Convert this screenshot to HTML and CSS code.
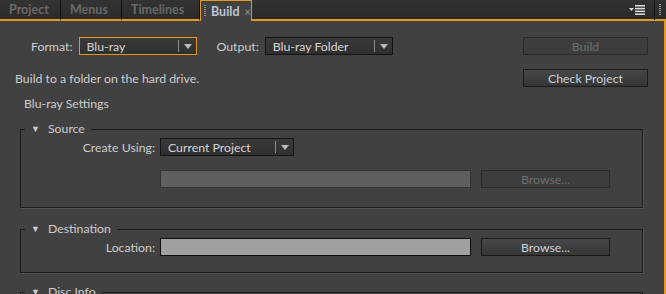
FILE: index.html
```html
<!DOCTYPE html>
<html lang="en">
<head>
  <meta charset="UTF-8" />
  <title>Build</title>
  <link rel="stylesheet" href="styles.css">
</head>
<body>
  <div class="tabbar">
    <div class="tab">Project</div>
    <div class="tab">Menus</div>
    <div class="tab tab-wide">Timelines</div>
    <div class="tab tab-active"><span class="grip"></span>Build <span class="close">&times;</span></div>
    <div class="tab-fill">
      <span class="panel-menu">
        <svg width="16" height="10" viewBox="0 0 16 10">
          <path d="M0 3h5l-2.5 3z" fill="#d8d8d8"/>
          <rect x="6" y="0" width="10" height="1.5" fill="#e0e0e0"/>
          <rect x="6" y="2.8" width="10" height="1.5" fill="#e0e0e0"/>
          <rect x="6" y="5.6" width="10" height="1.5" fill="#e0e0e0"/>
          <rect x="6" y="8.4" width="10" height="1.5" fill="#e0e0e0"/>
        </svg>
      </span>
      <span class="grip-end"></span>
    </div>
  </div>

  <div class="panel">
    <div class="row row-top">
      <label class="lbl">Format:</label>
      <div class="select select-focus select-format"><span>Blu-ray</span><i class="arrow"></i></div>
      <label class="lbl lbl-output">Output:</label>
      <div class="select select-output"><span>Blu-ray Folder</span><i class="arrow"></i></div>
      <button class="btn btn-disabled btn-right">Build</button>
    </div>

    <div class="row row-desc">
      <span class="desc">Build to a folder on the hard drive.</span>
      <button class="btn btn-right">Check Project</button>
    </div>

    <div class="section-title">Blu-ray Settings</div>

    <fieldset class="group group-source">
      <legend><span class="tri">&#9660;</span>Source</legend>
      <div class="field">
        <label class="flbl">Create Using:</label>
        <div class="select select-using"><span>Current Project</span><i class="arrow"></i></div>
      </div>
      <div class="field">
        <span class="flbl"></span>
        <div class="text text-disabled"></div>
        <button class="btn btn-disabled btn-browse">Browse...</button>
      </div>
    </fieldset>

    <fieldset class="group group-dest">
      <legend><span class="tri">&#9660;</span>Destination</legend>
      <div class="field">
        <label class="flbl">Location:</label>
        <div class="text text-location"></div>
        <button class="btn btn-browse">Browse...</button>
      </div>
    </fieldset>

    <fieldset class="group group-disc">
      <legend><span class="tri">&#9660;</span>Disc Info</legend>
    </fieldset>
  </div>
</body>
</html>
```

FILE: styles.css
```css
* { box-sizing: border-box; }
html, body {
  margin: 0; padding: 0;
  width: 666px; height: 294px;
  overflow: hidden;
  background: #414141;
  font-family: 'Lato', 'Open Sans', sans-serif;
  font-size: 12.3px;
  color: #cdcdcd;
}

/* tab strip */
.tabbar {
  display: flex; height: 21px;
  background: linear-gradient(#323232, #282828);
}
.tab {
  width: 61px; height: 21px;
  border-right: 1px solid #111;
  border-bottom: 2px solid #e39a1c;
  display: flex; align-items: center;
  padding-left: 9px;
  font-weight: bold; font-size: 12.5px; color: #6a6a6a;
  background: linear-gradient(#333, #2b2b2b);
}
.tab-wide { width: 78px; }
.tab-active {
  width: 52px;
  background: #414141;
  border: 1px solid #e39a1c;
  border-bottom: none;
  padding-left: 3px;
  color: #bcc6d6;
}
.tab-active .grip {
  width: 2px; height: 12px; margin-right: 5px;
  background: repeating-linear-gradient(#888 0 1px, transparent 1px 2px);
}
.close { font-weight: normal; color: #999; margin-left: 5px; font-size: 11px; }
.tab-fill {
  flex: 1; display: flex; align-items: center; justify-content: flex-end;
  border-bottom: 2px solid #e39a1c;
}
.panel-menu { display: flex; margin-right: 9px; }
.grip-end {
  width: 8px; height: 20px; margin-right: 4px;
  border-left: 1px solid #151515;
  background: repeating-linear-gradient(#999 0 1px, transparent 1px 2px) no-repeat 4px 4px / 2px 12px;
}

/* panel body */
.panel {
  height: 273px;
  border-right: 2px solid #e39a1c;
  padding-top: 16px;
}
.row { display: flex; align-items: center; }
.row-top { padding-left: 31px; height: 18px; }
.lbl { margin-right: 6px; }
.lbl-output { margin-left: 20px; }
.btn-right { margin-left: auto; margin-right: 16px; }

.select {
  height: 18px;
  display: flex; align-items: center;
  border: 1px solid #141414;
  background: linear-gradient(#3a3a3a, #2f2f2f);
  color: #d6d6d6;
  padding-left: 7px;
}
.select span { flex: 1; }
.select .arrow {
  width: 18px; height: 12px;
  border-left: 1px solid #8a8a8a;
  position: relative;
}
.select .arrow::after {
  content: ""; position: absolute; left: 5px; top: 4px;
  border-left: 4px solid transparent; border-right: 4px solid transparent;
  border-top: 5px solid #bbb;
}
.select-focus { border-color: #e39a1c; }
.select-format { width: 118px; }
.select-output { width: 128px; }
.select-using { width: 134px; }

.btn {
  height: 18px; width: 125px;
  font-family: inherit; font-size: 12.3px;
  border: 1px solid #1a1a1a;
  background: linear-gradient(#474747, #363636);
  color: #c9d1dc;
  padding: 0;
}
.btn-disabled {
  background: #3d3d3d;
  border-color: #2b2b2b;
  color: #6e6e6e;
}

.row-desc { margin-top: 14px; padding-left: 15px; height: 18px; }

.section-title { margin: 9px 0 0 24px; height: 18px; }

/* groups */
.group {
  margin: 0 21px 0 20px;
  padding: 0;
  border: 1px solid #1c1c1c;
  box-shadow: 1px 1px 0 #545454;
  min-width: 0;
}
.group legend {
  margin-left: 4px;
  padding: 0 6px;
  line-height: 14px;
}
.tri { font-size: 9px; margin-right: 8px; vertical-align: 1px; }
.group-source { margin-top: 8px; height: 86px; }
.group-dest { margin-top: 14px; height: 51px; }
.group-disc { margin-top: 12px; height: 30px; }

.field { display: flex; align-items: center; height: 18px; margin-top: 2px; }
.group-source .field + .field { margin-top: 14px; }
.flbl { width: 134px; text-align: right; margin-right: 5px; }
.text { width: 311px; height: 18px; }
.text-disabled { background: #5f5f5f; border: 1px solid #333; }
.text-location { background: #a0a0a0; border: 1px solid #0e0e0e; }
.btn-browse { margin-left: 10px; width: 129px; }
```
